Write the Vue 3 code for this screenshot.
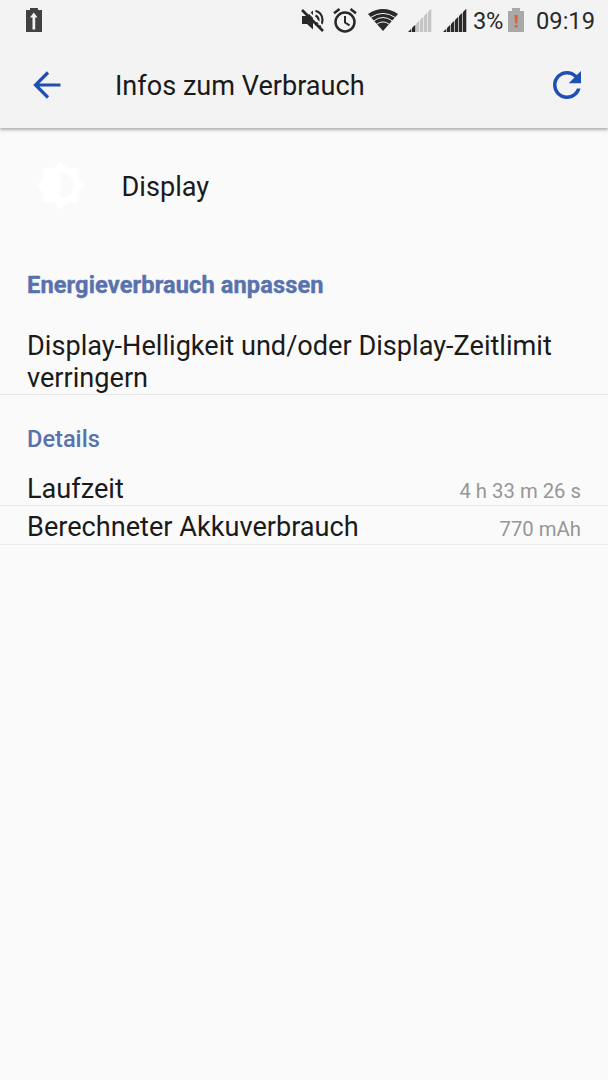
<!-- Akku: Infos zum Verbrauch -->
<template>
  <div class="usage-page">
    <header class="header">
      <div class="status-bar">
        <svg class="icon-charge" viewBox="0 0 16 24">
          <path fill="#424242" d="M0 2h4V0h8v2h4v22H0z" />
          <path fill="#f3f3f3" d="M7.800 4.500 11.500 9.500H9.200V21.500H6.500V9.500H4z" />
        </svg>
        <div class="status-icons">
          <svg class="icon-mute" viewBox="0 0 24 24">
            <path fill="#292929" d="M1 8h5l6-5.500v19L6 16H1z" />
            <path
              fill="none"
              stroke="#292929"
              stroke-width="2.200"
              d="M14.500 7.500q3 1.500 3 4.500t-3 4.500M14.500 2.700q7 2 7 9.300 0 4-2.500 6.500"
            />
            <path stroke="#f3f3f3" stroke-width="2" d="M3.500 0 24 20.500" />
            <path stroke="#292929" stroke-width="2.600" d="M1 2 22 23" />
          </svg>
          <svg class="icon-alarm" viewBox="0 0 24 25">
            <g fill="none" stroke="#292929" stroke-width="2.500">
              <circle cx="12" cy="14" r="9.500" />
              <path d="M1 5.300 6.500 1M17.500 1 23 5.300" />
              <path d="M12 8v6.500l4.500 2.800" stroke-width="2" />
            </g>
          </svg>
          <svg class="icon-wifi" viewBox="0 0 30 22">
            <path fill="#292929" d="M0 5Q15-5 30 5L15 22z" />
            <g fill="none" stroke="#f3f3f3" stroke-width="1">
              <path d="M2.500 8.600Q15 .2 27.500 8.600" />
              <path d="M5.500 12Q15 5 24.500 12" />
              <path d="M8.500 15.400Q15 10.400 21.500 15.400" />
            </g>
          </svg>
          <svg
            v-for="sim in sims"
            :key="sim.id"
            class="icon-signal"
            :class="sim.id"
            viewBox="0 0 24 24"
          >
            <path
              v-for="bar in 6"
              :key="bar"
              :fill="bar <= sim.level ? '#292929' : '#c4c4c4'"
              :d="barPath(bar)"
            />
          </svg>
          <span class="percent">3%</span>
          <svg class="icon-battery" viewBox="0 0 16 24">
            <path fill="#a9a9a9" d="M0 3h4V0h8v3h4v21H0z" />
            <path fill="#e2603c" d="M6.500 7h3.400l-.5 8.500H7zM6.700 17h3v2.500h-3z" />
          </svg>
          <span class="clock">09:19</span>
        </div>
      </div>
      <div class="toolbar">
        <svg class="icon-back" viewBox="0 0 28 28">
          <path fill="none" stroke="#1f4fb2" stroke-width="3.200" d="M27.500 14H3M15 1.500 2.500 14 15 26.500" />
        </svg>
        <h1 class="title">Infos zum Verbrauch</h1>
        <svg class="icon-refresh" viewBox="4 4 16 16">
          <path
            fill="#1f4fb2"
            d="M17.650 6.350C16.200 4.900 14.210 4 12 4c-4.420 0-7.990 3.580-7.990 8s3.570 8 7.990 8c3.730 0 6.840-2.550 7.730-6h-2.080c-.82 2.330-3.040 4-5.650 4-3.310 0-6-2.690-6-6s2.690-6 6-6c1.660 0 3.140.69 4.220 1.780L13 11h7V4z"
          />
        </svg>
      </div>
    </header>

    <div class="app-row">
      <svg class="icon-brightness" viewBox="0.690 0.690 22.620 22.620">
        <path
          fill="#fff"
          d="M20 15.310 23.310 12 20 8.690V4h-4.690L12 .69 8.690 4H4v4.690L.69 12 4 15.310V20h4.690L12 23.310 15.310 20H20zM12 18V6c3.310 0 6 2.690 6 6s-2.690 6-6 6z"
        />
      </svg>
      <span>Display</span>
    </div>

    <h2 class="section adjust">Energieverbrauch anpassen</h2>
    <p class="hint">Display-Helligkeit und/oder Display-Zeitlimit verringern</p>

    <h2 class="section details">Details</h2>
    <div v-for="item in details" :key="item.label" class="detail-row">
      <span class="label">{{ item.label }}</span>
      <span class="value">{{ item.value }}</span>
    </div>
  </div>
</template>

<script setup>
const details = [
  { label: 'Laufzeit', value: '4 h 33 m 26 s' },
  { label: 'Berechneter Akkuverbrauch', value: '770 mAh' },
]

// Signalstärke der beiden SIM-Karten
const sims = [
  { id: 'sim1', level: 2 },
  { id: 'sim2', level: 6 },
]

// Balken mit schräger Oberkante
const barPath = (bar) => {
  const left = (bar - 1) * 4
  const right = left + 3.3
  return `M${left} 24V${24 - left}L${right} ${24 - right}V24z`
}
</script>

<style>
body {
  margin: 0;
  background: #fafafa;
}
</style>

<style scoped>
.usage-page {
  min-height: 1080px;
  background: #fafafa;
  color: #1a1a1a;
  font-family: Roboto, 'Liberation Sans', sans-serif;
  font-size: 27.14px;
  line-height: 32px;
}

svg {
  display: block;
  flex: none;
}

h1,
h2,
p {
  margin: 0;
}

.header {
  box-sizing: border-box;
  height: 128px;
  background: #f3f3f3;
  box-shadow: 0 2px 3px rgba(0, 0, 0, 0.3);
}

.status-bar {
  display: flex;
  justify-content: space-between;
  height: 42px;
  padding: 0 13px 0 26px;
  color: #292929;
  font-size: 23.7px;
  line-height: 43px;
}

.icon-charge {
  width: 16px;
  height: 24px;
  margin-top: 8px;
}

.status-icons {
  display: flex;
}

.icon-mute {
  width: 24px;
  height: 24px;
  margin: 8px 8px 0 0;
}

.icon-alarm {
  width: 24px;
  height: 25px;
  margin: 8px 11px 0 0;
}

.icon-wifi {
  width: 30px;
  height: 22px;
  margin: 9px 10px 0 0;
}

.icon-signal {
  width: 24px;
  height: 24px;
  margin-top: 8px;
}

.sim1 {
  margin-right: 11px;
}

.sim2 {
  margin-right: 6px;
}

.percent {
  width: 35px;
  letter-spacing: -0.3px;
}

.icon-battery {
  width: 16px;
  height: 24px;
  margin: 8px 12px 0 0;
}

.clock {
  width: 59px;
}

.toolbar {
  display: flex;
  align-items: center;
  height: 85px;
  padding: 0 27px 0 33px;
}

.icon-back {
  width: 28px;
  height: 28px;
}

.title {
  flex: 1;
  margin: 2px 0 0 54px;
  font-size: 27.1px;
  font-weight: 400;
}

.icon-refresh {
  width: 28px;
  height: 28px;
}

.app-row {
  display: flex;
  align-items: center;
  gap: 36.5px;
  height: 118px;
  padding-left: 36px;
}

.icon-brightness {
  width: 49px;
  height: 49px;
  margin-bottom: 4px;
}

.section {
  padding: 0 27px;
  color: #5872ad;
  font-size: 23.6px;
  line-height: 28px;
}

.adjust {
  margin-top: 25px;
  font-weight: 700;
  letter-spacing: 0.11px;
  -webkit-text-stroke: 0.4px #5872ad;
}

.hint {
  margin-top: 31px;
  padding: 0 27px;
  border-bottom: 1px solid #e8e8e8;
}

.details {
  margin: 30px 0 14px;
  font-weight: 500;
}

.detail-row {
  display: flex;
  justify-content: space-between;
  align-items: baseline;
  height: 32px;
  padding: 6px 27px 0;
  border-bottom: 1px solid #ebebeb;
}

.detail-row:last-child {
  height: 33px;
  padding-top: 5px;
}

.value {
  color: #969696;
  font-size: 20.3px;
}
</style>
